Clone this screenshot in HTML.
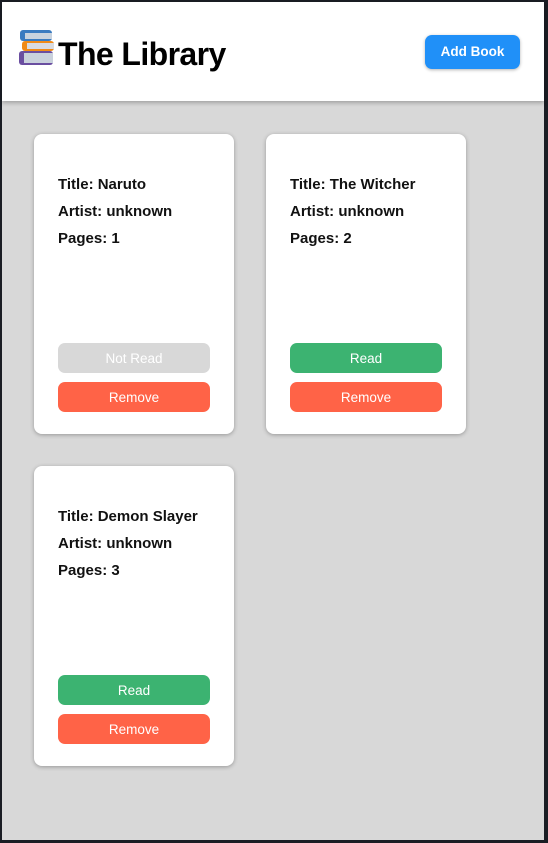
<!DOCTYPE html>
<html><head><style>
body{margin:0;width:548px;height:843px;background:#1a1d24;font-family:"Liberation Sans",sans-serif;overflow:hidden;position:relative}
#page{position:absolute;left:2px;top:2px;width:542px;height:838px;background:#d8d8d8}
header{position:absolute;left:0;top:0;width:542px;height:99px;background:#fff;box-shadow:0 2px 4px rgba(0,0,0,.25)}
h1{position:absolute;left:56px;top:34px;margin:0;font-size:32px;font-weight:bold;color:#000;letter-spacing:-0.6px}
.add{position:absolute;left:423px;top:33px;width:95px;height:34px;background:#2090f8;color:#fff;border-radius:7px;font-weight:bold;font-size:13.5px;line-height:34px;text-align:center;box-shadow:0 1px 3px rgba(0,0,0,.3)}
.card{position:absolute;width:200px;height:300px;background:#fff;border-radius:8px;box-shadow:0 1px 4px rgba(0,0,0,.3)}
.card p{margin:0;position:absolute;left:24px;font-size:15px;font-weight:bold;color:#111}
.btn{position:absolute;left:24px;width:152px;height:30px;border-radius:7px;color:#fff;font-size:13.5px;line-height:32px;text-align:center}
.nr{background:#d8d8d8;top:209px}.rd{background:#3cb371;top:209px}.rm{background:#ff6347;top:248px}
</style></head><body>
<div id="page">
<header>
<svg style="position:absolute;left:16px;top:28px" width="36" height="36" viewBox="0 0 36 36">
<rect x="2" y="0" width="32" height="11" rx="3" fill="#3a7bc0"/><rect x="7" y="3" width="27" height="6" fill="#c9d3de"/>
<rect x="4" y="11" width="32" height="10" rx="3" fill="#f08a16"/><rect x="9" y="13" width="27" height="6" fill="#d9dbe0"/>
<rect x="1" y="21" width="34" height="14" rx="3" fill="#6a4ea0"/><rect x="6" y="23" width="29" height="10" fill="#c9d1dc"/>
</svg>
<h1>The Library</h1>
<div class="add">Add Book</div>
</header>
<div class="card" style="left:32px;top:132px"><p style="top:42px">Title: Naruto</p><p style="top:69px">Artist: unknown</p><p style="top:96px">Pages: 1</p><div class="btn nr">Not Read</div><div class="btn rm">Remove</div></div>
<div class="card" style="left:264px;top:132px"><p style="top:42px">Title: The Witcher</p><p style="top:69px">Artist: unknown</p><p style="top:96px">Pages: 2</p><div class="btn rd">Read</div><div class="btn rm">Remove</div></div>
<div class="card" style="left:32px;top:464px"><p style="top:42px">Title: Demon Slayer</p><p style="top:69px">Artist: unknown</p><p style="top:96px">Pages: 3</p><div class="btn rd">Read</div><div class="btn rm">Remove</div></div>
</div>
</body></html>
